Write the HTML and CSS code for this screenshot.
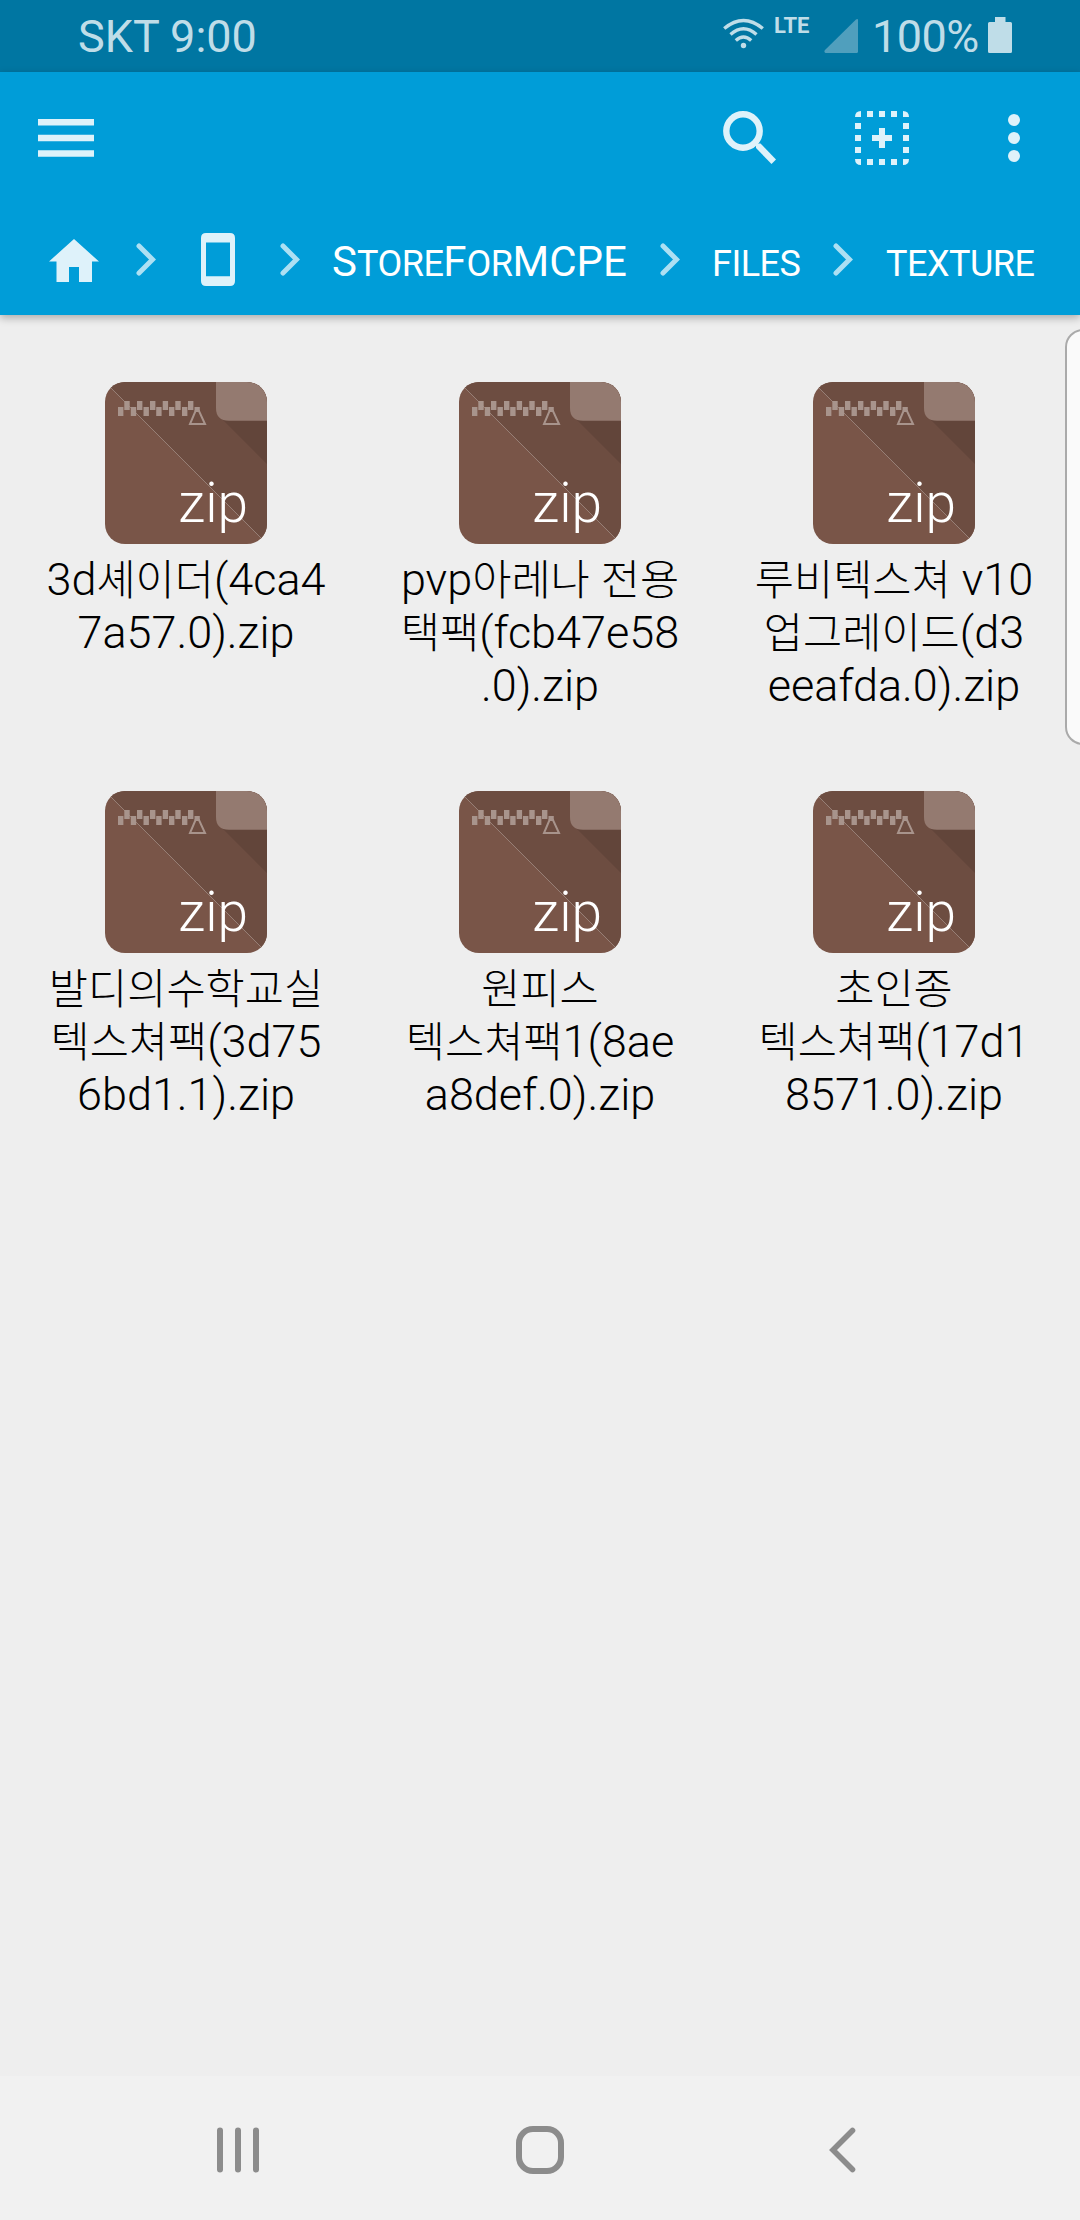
FILE: index.html
```html
<!DOCTYPE html>
<html lang="ko">
<head>
<meta charset="utf-8">
<title>texture</title>
<link rel="stylesheet" href="styles.css">
</head>
<body>
<svg class="defs" width="0" height="0">
  <defs>
    <clipPath id="tile"><rect width="162" height="162" rx="20"/></clipPath>
    <symbol id="chevron" viewBox="0 0 20 33"><path d="M3 3 16.500 16.500 3 30" fill="none" stroke="currentColor" stroke-width="5" stroke-linecap="round"/></symbol>
    <symbol id="zip" viewBox="0 0 162 162">
      <g clip-path="url(#tile)">
        <rect width="162" height="162" fill="#795548"/>
        <path d="M0 0H162V162Z" fill="#6d4d41"/>
        <path d="M115 35 162 82V38H120Z" fill="#62453a"/>
        <path d="M111 0V26Q111 38.700 124 38.700H162V0Z" fill="#947a70"/>
        <path d="M19.300 19h5.400v9h-5.400zM32 19h5.400v9H32zM45 19h5.400v9H45zM57.700 19h5.400v9h-5.400zM70.300 19h5.400v9h-5.400zM83 19h5.400v9H83zM13 25h5.400v9H13zM25.800 25h5.400v9h-5.400zM38.500 25h5.400v9h-5.400zM51.200 25h5.400v9h-5.400zM64 25h5.400v9H64zM77 25h5.400v9H77zM89.500 25h5.300v4h-5.300z" fill="#a8948c"/>
        <path d="M90.500 29H94L100 42H85Z" fill="none" stroke="#a8948c" stroke-width="2"/>
        <path d="M0 0 162 162" stroke="#a8948c" stroke-width=".7"/>
      </g>
    </symbol>
  </defs>
</svg>

<header class="status">
  <span class="carrier">SKT 9:00</span>
  <div class="indicators">
    <svg class="wifi" viewBox="0 0 41 31" width="41" height="31">
      <g fill="none" stroke="currentColor" stroke-width="3.400">
        <path d="M1.200 10.500Q20.500-5.500 39.800 10.500M7.500 16.500Q20.500 5 33.500 16.500M12.800 22.500Q20.500 15.500 28.200 22.500"/>
      </g>
      <circle cx="20.500" cy="27.500" r="2.700" fill="currentColor"/>
    </svg>
    <span class="lte">LTE</span>
    <svg class="signal" viewBox="0 0 34 34" width="34" height="34"><path d="M34 1V32.500Q34 34 32.500 34H1.500Q-.5 33 1 31L32 .5Q34-.5 34 1Z" fill="currentColor"/></svg>
    <span class="percent">100%</span>
    <svg class="battery" viewBox="0 0 24 36" width="24" height="36"><path d="M7 0H17.500V5H22.500Q24 5 24 6.500V34.500Q24 36 22.500 36H1.500Q0 36 0 34.500V6.500Q0 5 1.500 5H7Z" fill="currentColor"/></svg>
  </div>
</header>

<div class="appbar">
  <div class="toolbar">
    <svg class="menu" viewBox="0 0 56 38" width="56" height="38"><path d="M0 0H56V6.500H0ZM0 15.800H56V22.200H0ZM0 31.300H56V37.800H0Z" fill="currentColor"/></svg>
    <svg class="search" viewBox="0 0 54 54" width="54" height="54"><circle cx="20" cy="20" r="16.700" fill="none" stroke="currentColor" stroke-width="6.400"/><path d="M33 33.500 35 32.500H37.500L53 48.500 48.500 53 33 37Z" fill="currentColor"/></svg>
    <svg class="select" viewBox="0 0 54 54" width="54" height="54">
      <path d="M6 0V6H0Q0 0 6 0ZM12 0h6v6h-6zM24 0h6v6h-6zM36 0h6v6h-6zM48 0Q54 0 54 6H48ZM0 12h6v6H0zM0 24h6v6H0zM0 36h6v6H0zM48 12h6v6h-6zM48 24h6v6h-6zM48 36h6v6h-6zM0 48H6V54Q0 54 0 48ZM12 48h6v6h-6zM24 48h6v6h-6zM36 48h6v6h-6zM48 48H54Q54 54 48 54ZM24 17h6v7h7v6h-7v7h-6v-7h-7v-6h7z" fill="currentColor"/>
    </svg>
    <svg class="more" viewBox="0 0 12 48" width="12" height="48"><g fill="currentColor"><circle cx="6" cy="6" r="6"/><circle cx="6" cy="24" r="6"/><circle cx="6" cy="42" r="6"/></g></svg>
  </div>
  <nav class="crumbs">
    <svg class="home" viewBox="0 0 50 43" width="50" height="43"><path d="M25 0 50 22.500H43V43H30V28H20V43H7.500V22.500H0Z" fill="currentColor"/></svg>
    <svg class="sep sep-home" width="20" height="33"><use href="#chevron"/></svg>
    <svg class="phone" viewBox="0 0 34 53" width="34" height="53"><path fill-rule="evenodd" d="M5 0H29Q34 0 34 5V48Q34 53 29 53H5Q0 53 0 48V5Q0 0 5 0ZM5 9.500V43.300H29V9.500Z" fill="currentColor"/></svg>
    <svg class="sep sep-phone" width="20" height="33"><use href="#chevron"/></svg>
    <span class="crumb crumb-store">S<span class="sc">tore</span>F<span class="sc">or</span>MCPE</span>
    <svg class="sep" width="20" height="33"><use href="#chevron"/></svg>
    <span class="crumb crumb-files"><span class="sc">files</span></span>
    <svg class="sep" width="20" height="33"><use href="#chevron"/></svg>
    <span class="crumb crumb-texture"><span class="sc">texture</span></span>
  </nav>
</div>

<main class="files">
  <div class="file"><div class="icon"><svg width="162" height="162"><use href="#zip"/></svg><span class="ext">zip</span></div>
    <p class="name">3d<span class="ko">셰이더</span>(4ca4<br>7a57.0).zip</p></div>
  <div class="file"><div class="icon"><svg width="162" height="162"><use href="#zip"/></svg><span class="ext">zip</span></div>
    <p class="name">pvp<span class="ko">아레나</span> <span class="ko">전용</span><br><span class="ko">택팩</span>(fcb47e58<br>.0).zip</p></div>
  <div class="file"><div class="icon"><svg width="162" height="162"><use href="#zip"/></svg><span class="ext">zip</span></div>
    <p class="name"><span class="ko">루비텍스쳐</span> v10<br><span class="ko">업그레이드</span>(d3<br>eeafda.0).zip</p></div>
  <div class="file"><div class="icon"><svg width="162" height="162"><use href="#zip"/></svg><span class="ext">zip</span></div>
    <p class="name"><span class="ko">발디의수학교실</span><br><span class="ko">텍스쳐팩</span>(3d75<br>6bd1.1).zip</p></div>
  <div class="file"><div class="icon"><svg width="162" height="162"><use href="#zip"/></svg><span class="ext">zip</span></div>
    <p class="name"><span class="ko">원피스</span><br><span class="ko">텍스쳐팩</span>1(8ae<br>a8def.0).zip</p></div>
  <div class="file"><div class="icon"><svg width="162" height="162"><use href="#zip"/></svg><span class="ext">zip</span></div>
    <p class="name"><span class="ko">초인종</span><br><span class="ko">텍스쳐팩</span>(17d1<br>8571.0).zip</p></div>
  <div class="edge-handle"></div>
</main>

<footer class="navbar">
  <svg viewBox="0 0 48 48" width="48" height="48"><path d="M6 4.500V43.500M24 4.500V43.500M42 4.500V43.500"/></svg>
  <svg viewBox="0 0 48 48" width="48" height="48"><rect x="3" y="3" width="42" height="42" rx="14"/></svg>
  <svg class="back" viewBox="0 0 48 48" width="48" height="48"><path d="M34.500 4.500 15 24 34.500 43.500"/></svg>
</footer>
</body>
</html>
```
FILE: styles.css
```css
* { box-sizing: border-box; }

body {
  margin: 0;
  width: 1080px;
  height: 2220px;
  display: flex;
  flex-direction: column;
  overflow: hidden;
  background: #eee;
  font-family: Roboto, "Noto Sans CJK KR", sans-serif;
}

svg { display: block; flex: none; }
.defs { position: absolute; }

.status {
  height: 72px;
  flex: none;
  display: flex;
  justify-content: space-between;
  padding: 0 68px 0 78px;
  background: #0076a2;
  color: #bfdde8;
  font-size: 45px;
  line-height: 74px;
}
.indicators { display: flex; }
.wifi { margin: 18px 10px 0 0; }
.lte { width: 50px; font-size: 22px; font-weight: 700; line-height: 51px; }
.signal { margin: 19px 14px 0 0; color: #509fbd; }
.percent { width: 116px; letter-spacing: -.5px; }
.battery { margin-top: 17px; }

.appbar {
  height: 243px;
  flex: none;
  position: relative;
  z-index: 1;
  background: #009dd8;
  color: #def2fa;
  box-shadow: 0 3px 8px rgba(0, 0, 0, .28);
}
.toolbar {
  height: 132px;
  display: flex;
  align-items: center;
  padding: 0 60px 0 38px;
}
.search { margin-left: auto; }
.select { margin-left: 78px; }
.more { margin-left: 99px; }

.crumbs {
  height: 111px;
  display: flex;
  align-items: flex-start;
  padding-left: 49px;
}
.home { margin-top: 35px; }
.sep { margin-top: 39px; color: #ade0f3; }
.sep-home { margin-left: 37px; }
.phone { margin: 29px 0 0 45px; }
.sep-phone { margin-left: 45px; }
.crumb {
  height: 60px;
  margin-top: 28px;
  color: #fff;
  font-size: 42px;
  line-height: 60px;
  white-space: nowrap;
}
.sc { font-size: 36px; letter-spacing: -.5px; text-transform: uppercase; }
.crumb-store { width: 328px; margin-left: 32px; }
.crumb-files { width: 121px; margin-left: 32px; }
.crumb-texture { margin-left: 33px; }

.files {
  flex: 1;
  position: relative;
  display: grid;
  grid-template-columns: repeat(3, 354px);
  grid-auto-rows: 409px;
  padding: 67px 9px 0;
}
.file { display: flex; flex-direction: column; align-items: center; }
.icon { position: relative; width: 162px; height: 162px; }
.ext {
  position: absolute;
  right: 19px;
  bottom: 9px;
  color: #fff;
  font-size: 55px;
  font-weight: 300;
  line-height: 64px;
}
.name {
  margin: 9px 0 0;
  color: #000;
  font-size: 45px;
  font-weight: 300;
  line-height: 53px;
  text-align: center;
  white-space: nowrap;
}
.ko { font-size: 42.6px; line-height: 1; }
.edge-handle {
  position: absolute;
  right: -24px;
  top: 14px;
  width: 39px;
  height: 416px;
  border: 2px solid #aaa;
  border-radius: 18px;
  background: #fafafa;
}

.navbar {
  height: 144px;
  flex: none;
  display: flex;
  justify-content: space-between;
  align-items: center;
  padding: 4px 214px 0;
  background: #f1f1f1;
}
.navbar svg {
  fill: none;
  stroke: #8c8c8c;
  stroke-width: 6;
  stroke-linecap: round;
}
.navbar .back { stroke-width: 5.600; }
```
